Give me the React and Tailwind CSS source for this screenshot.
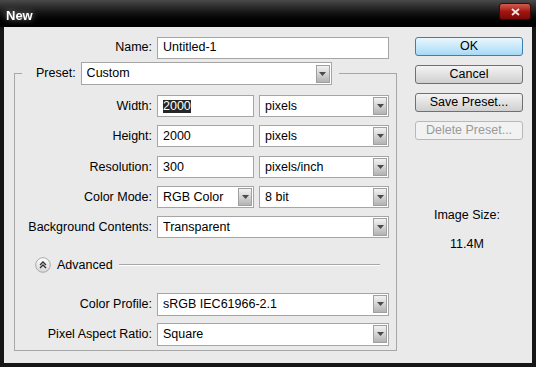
const font = "font-['Liberation_Sans',Arial,sans-serif]"

function TextBox({ children, className = '' }) {
  return (
    <div className={`flex items-center h-[22px] border border-[#a5a5a5] bg-white pl-[5px] ${className}`}>
      {children}
    </div>
  )
}

function Select({ value, className = '' }) {
  return (
    <div className={`flex items-center h-[22px] border border-[#a5a5a5] bg-white pl-[5px] pr-[1px] ${className}`}>
      <span className="flex-1 truncate">{value}</span>
      <span className="w-[14px] h-[18px] flex items-center justify-center border border-[#a0a0a0] bg-linear-to-b from-[#f2f2f2] via-[#d4d4d4] to-[#b2b2b2]">
        <svg width="7" height="4" viewBox="0 0 7 4">
          <path d="M0 0h7L3.5 4z" fill="#4a4a4a" />
        </svg>
      </span>
    </div>
  )
}

function Row({ label, children, className = '' }) {
  return (
    <div className={`flex items-center h-[22px] ${className}`}>
      <span className="w-[137px] text-right">{label}</span>
      <div className="ml-[5px] flex gap-[5px]">{children}</div>
    </div>
  )
}

function Btn({ children, variant = 'normal', className = '' }) {
  const styles = {
    primary: 'border-[#3c7fb1] bg-linear-to-b from-[#eaf6fd] via-[#c9e9fb] to-[#a7d9f5] text-black',
    normal: 'border-[#707070] bg-linear-to-b from-[#f4f4f4] via-[#e2e2e2] to-[#cfcfcf] text-black',
    disabled: 'border-[#b5b9bc] bg-[#f2f2f2] text-[#9a9a9a]'
  }
  return (
    <div className={`w-[108px] h-[19px] flex items-center justify-center border rounded-[3px] ${styles[variant]} ${className}`}>
      {children}
    </div>
  )
}

export default function App() {
  return (
    <div className={`w-[536px] h-[367px] bg-[#161616] flex flex-col overflow-hidden text-[12.5px] text-black ${font}`}>
      {/* barra de título */}
      <div className="h-[27px] flex items-start justify-between bg-linear-to-b from-[#4a4a4a] via-[#121212] to-[#000000]">
        <span className="text-white font-bold text-[13px] ml-[6px] mt-[6px] drop-shadow-[0_0_3px_rgba(255,255,255,0.5)]">New</span>
        <div className="mr-[5px] mt-[3px] w-[32px] h-[17px] rounded-[3px] border border-[#3a0a0a] bg-linear-to-b from-[#d45a4f] via-[#a3150f] to-[#7a0b08] flex items-center justify-center">
          <svg width="9" height="8" viewBox="0 0 9 8">
            <path d="M1 1l7 6M8 1L1 7" stroke="#f4e6e6" strokeWidth="1.8" />
          </svg>
        </div>
      </div>

      <div className="flex-1 mx-[4px] mb-[4px] bg-[#eaeaea] flex">
        {/* columna izquierda */}
        <div className="w-[396px] flex flex-col">
          <div className="flex items-center h-[21px] mt-[10px]">
            <span className="w-[148px] text-right">Name:</span>
            <TextBox className="ml-[5px] w-[232px] h-[21px]">Untitled-1</TextBox>
          </div>

          <fieldset className="ml-[10px] mt-[4px] w-[383px] h-[289px] border border-[#a7a7a7]">
            <legend className="ml-[7px] pr-[7px]">
              <div className="flex items-center">
                <span className="pl-[14px]">Preset:</span>
                <Select value="Custom" className="ml-[5px] w-[251px] h-[23px]" />
              </div>
            </legend>

            <Row label="Width:" className="mt-[10px]">
              <TextBox className="w-[97px]">
                <span className="bg-[#262626] text-white leading-[13px]">2000</span>
              </TextBox>
              <Select value="pixels" className="w-[130px]" />
            </Row>
            <Row label="Height:" className="mt-[8px]">
              <TextBox className="w-[97px]">2000</TextBox>
              <Select value="pixels" className="w-[130px]" />
            </Row>
            <Row label="Resolution:" className="mt-[9px]">
              <TextBox className="w-[97px]">300</TextBox>
              <Select value="pixels/inch" className="w-[130px]" />
            </Row>
            <Row label="Color Mode:" className="mt-[8px]">
              <Select value="RGB Color" className="w-[97px]" />
              <Select value="8 bit" className="w-[130px]" />
            </Row>
            <Row label="Background Contents:" className="mt-[8px]">
              <Select value="Transparent" className="w-[232px]" />
            </Row>

            <div className="flex items-center mt-[19px] ml-[20px] mr-[16px] h-[16px]">
              <svg width="16" height="16" viewBox="0 0 16 16">
                <defs>
                  <linearGradient id="adv" x1="0" y1="0" x2="0" y2="1">
                    <stop offset="0" stopColor="#ffffff" />
                    <stop offset="1" stopColor="#d6d6d6" />
                  </linearGradient>
                </defs>
                <circle cx="8" cy="8" r="7.3" fill="url(#adv)" stroke="#a9a9a9" />
                <path d="M5 8l3-3 3 3M5 11l3-3 3 3" fill="none" stroke="#303030" strokeWidth="1.3" />
              </svg>
              <span className="ml-[6px]">Advanced</span>
              <div className="flex-1 ml-[6px] h-[2px] border-t border-[#a7a7a7] border-b border-b-white" />
            </div>

            <Row label="Color Profile:" className="mt-[20px]">
              <Select value="sRGB IEC61966-2.1" className="w-[232px] h-[23px]" />
            </Row>
            <Row label="Pixel Aspect Ratio:" className="mt-[8px]">
              <Select value="Square" className="w-[232px] h-[23px]" />
            </Row>
          </fieldset>
        </div>

        {/* columna derecha */}
        <div className="flex-1 flex flex-col">
          <Btn variant="primary" className="ml-[15px] mt-[10px]">OK</Btn>
          <Btn className="ml-[15px] mt-[9px]">Cancel</Btn>
          <Btn className="ml-[15px] mt-[9px]">Save Preset...</Btn>
          <Btn variant="disabled" className="ml-[15px] mt-[9px]">Delete Preset...</Btn>
          <div className="mt-[66px] text-center pl-[2px]">Image Size:</div>
          <div className="mt-[10px] text-center pl-[2px]">11.4M</div>
        </div>
      </div>
    </div>
  )
}
